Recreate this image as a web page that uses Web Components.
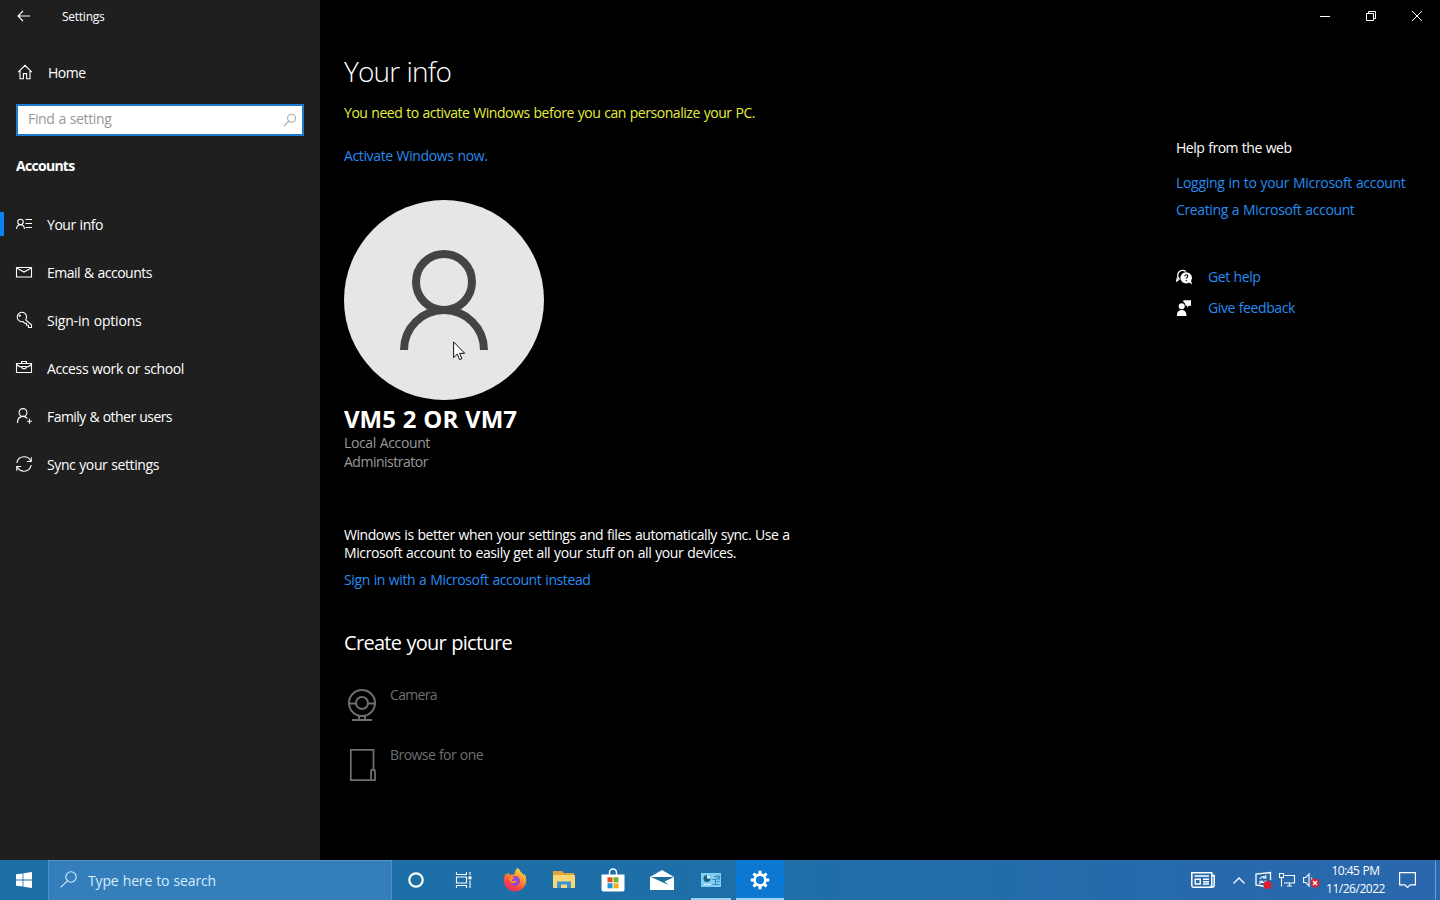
<!DOCTYPE html>
<html lang="en">
<head>
<meta charset="utf-8">
<title>Settings</title>
<style>
  html, body {
    margin: 0;
    height: 100%;
    background: #000;
    overflow: hidden;
  }
  body {
    font-family: "Open Sans", "Noto Sans", sans-serif;
    color: #fff;
  }
</style>
</head>
<body>
<settings-desktop></settings-desktop>

<script>
// Icon drawings, keyed by name: [viewBox width, viewBox height, markup].
const icons = {
  back: [14, 12, '<path d="M1 6H13M6 1L1 6l5 5"/>'],
  home: [16, 16, '<path d="M1.2 8.2L8 1.4l6.8 6.8M3 6.8v8h3.4V9.6h3.2v5.2H13v-8"/>'],
  search: [14, 14, '<circle cx="8.6" cy="5.2" r="4"/><path d="M5.8 8.2L1 13"/>'],
  find: [17, 17, '<circle cx="11" cy="6" r="5.200"/><path d="M7.400 9.800L.6 16.400"/>'],
  info: [16, 16, '<circle cx="4.500" cy="6" r="2.700"/><path d="M.6 13c0-2.600 1.600-4.300 3.900-4.300S8.400 10.400 8.400 13M9.500 3.500H16M9.500 7.500H16M9.500 11.500H16"/>'],
  mail: [16, 16, '<path d="M.5 3.500h15v9.500H.5zM.7 4L8 8l7.300-4"/>'],
  key: [16, 16, '<path d="M9.700 7.800l5.800 5v2.700h-3v-2.300h-2v-2h-2L7 9.600A4.700 4.700 0 1 1 9.700 7.800z"/><circle cx="3.700" cy="3.700" r=".6"/>'],
  work: [16, 16, '<path d="M.5 3.500h15v9H.5zM5.500 3.500v-2h5v2M.7 4.500C2.500 6.300 4.300 7 6 7.300M15.300 4.500C13.500 6.300 11.700 7 10 7.300M6 6.500h4V8c-1 .8-3 .8-4 0z"/>'],
  family: [16, 16, '<circle cx="7" cy="4.500" r="3.900"/><path d="M1.500 15c0-4 2-6.600 5.500-6.600 2 0 3.400.9 4.300 2.200M13.500 10.800v5M11 13.300h5"/>'],
  sync: [16, 16, '<path d="M.8 6.800C1.700 3 4.600.8 8 .8c3 0 5.700 1.700 6.900 4.400M15.200 1.200v4.300h-4.300M15.200 9.200C14.300 13 11.400 15.200 8 15.200c-3 0-5.700-1.700-6.900-4.400M.8 14.800v-4.300h4.300"/>'],
  minimize: [10, 10, '<path d="M0 5.500h10"/>'],
  restore: [10, 10, '<path d="M.5 2.500h7v7h-7zM2.500 2.500v-2h7v7h-2"/>'],
  close: [10, 10, '<path d="M0 0l10 10M10 0L0 10"/>'],
  help: [16, 16, '<path d="M3.500 10.300A5 5 0 1 1 9.800 2.500M3.500 10.300L.7 12l.6-3.500" stroke-width="1.300"/><path class="f" d="M10 3.200a5.600 5.600 0 1 0 3 10.300l3 1.900-.9-3.600A5.600 5.600 0 0 0 10 3.200z"/><path d="M8.800 7.200c0-2 3-1.800 3 0 0 1.200-1.500 1.100-1.500 2.600M10.300 11v1.200" stroke="#000" stroke-width="1.100"/>'],
  feedback: [16, 16, '<circle class="f" cx="5.700" cy="6.300" r="3"/><path class="f" d="M.9 16c0-3.500 1.200-6 4.800-6s4.800 2.500 4.800 6zM7.500.2H15v5.500h-2.200L11 7.800V5.700H9.500C9.500 3.800 8.600 2.600 7.200 2z"/>'],
  camera: [36, 40, '<g stroke-width="2"><circle cx="18" cy="18" r="13"/><circle cx="18" cy="18" r="6"/><path d="M5 18.500h7M24 18.500h7M15 30v4M21 30v4M8 35h20"/></g>'],
  browse: [36, 40, '<path d="M29.500 24V4.800H6.800v30.400H28M27 34V27c0-1.500.8-2.500 2-2.500s2 1 2 2.500v8.200h-4z" stroke-width="1.800"/>'],
  person: [200, 200, '<circle cx="100" cy="82" r="28"/><path d="M60 150a40 40 0 0 1 80 0"/>'],
  pointer: [13, 20, '<path d="M.6.9v15.700l3.700-3.500 2.300 5.500 2.300-1-2.300-5.300h5.100z" fill="#fff" stroke="#111"/>'],
  start: [16, 16, '<path class="f" d="M0 2.300L6.600 1.400v6.200H0zM7.400 1.300L16 0v7.600H7.400zM0 8.400h6.600v6.200L0 13.700zM7.400 8.400H16V16l-8.600-1.300z"/>'],
  cortana: [16, 16, '<circle cx="8" cy="8" r="6.700" stroke-width="2.200"/>'],
  tasks: [18, 16, '<path d="M1.500 0v2.500h10V0M1.500 5h10v6h-10zM1.500 16v-2.500h10V16M15 0v3M15 8.500V16"/><path class="f" d="M13.500 4.300h3v3h-3z"/>'],
  firefox: [24, 24, `<defs>
      <linearGradient id="fox" x1=".85" y1="0" x2=".3" y2="1"><stop offset="0" stop-color="#ffe14a"/><stop offset=".4" stop-color="#ff9a2b"/><stop offset=".75" stop-color="#fa4443"/><stop offset="1" stop-color="#e52675"/></linearGradient>
    </defs>
    <path class="n" fill="url(#fox)" d="M14.500 0c2 1 3 3 3.200 4.300 1 .2 2.400 1.400 2.700 2.800.8-.3.700-1.300.7-1.300 2 2 2.400 5.300 2 8.200C22.300 19.500 17.500 23.500 12 23.500 5.700 23.500.8 18.500.8 12.500c0-3 .8-5.500 2.600-7.700L3.800 7l1.700-2.500L6.500 7c1.500-.8 3.500-.6 5-.2C11.500 4 12.600 1.500 14.500 0z"/>
    <circle class="n" cx="12" cy="13" r="5" fill="#9147d9"/>
    <path class="n" fill="#ff8a2c" d="M6 9.500c2-1.600 4-.5 5.500.2 0 1-2.500 1.300-2.800 2.800 1.800 1.200 4 .2 5.300-.5-.5 2.500-2.700 3.500-5 3C7.500 14.600 6 12.500 6 9.500z"/>`],
  explorer: [22, 20, '<path class="n" fill="#dca63d" d="M0 1h9l2 2h10v5H0z"/><path class="n" fill="#f8d775" d="M0 5h22v13H0z"/><path class="n" fill="#3b93d3" d="M4 11.500h14V18h-4v-3.500H8V18H4z"/>'],
  store: [24, 24, '<path d="M8.500 7V4.500a3.500 3.500 0 0 1 7 0V7" stroke-width="1.400"/><path class="f" d="M.5 6.500h23v15.200a1.800 1.800 0 0 1-1.800 1.800H2.300A1.800 1.800 0 0 1 .5 21.700z"/><path class="n" fill="#e34e25" d="M6.500 9.300h5v5h-5z"/><path class="n" fill="#74af20" d="M12.500 9.300h5v5h-5z"/><path class="n" fill="#1795d4" d="M6.500 15.300h5v5h-5z"/><path class="n" fill="#f4ad14" d="M12.500 15.300h5v5h-5z"/>'],
  letter: [24, 20, '<path class="f" d="M0 7L12 0l12 7v13H0z"/><path class="n" fill="#1e6e9e" d="M1 7h23l-9.500 4.500 4 3.500z"/>'],
  panel: [20, 14, '<path class="n" fill="#82cdf3" d="M0 0h20v14H0z"/><circle class="n" cx="6" cy="5.500" r="3.500" fill="#185d83"/><path class="n" fill="#d8f1ff" d="M6 5.500V2a3.500 3.500 0 0 1 3.500 3.500zM3 11h7v1H3z"/><path d="M11.500 6.500h3v5h-3M16 3h2.500v3H16zM13 3.500h2M15.500 8.500h3M15.500 11.500h3" stroke="#2d86b5"/>'],
  gear: [20, 20, '<circle cx="10" cy="10" r="5.400" stroke-width="2.600"/><path d="M10 4.500V.8M10 15.500v3.700M4.500 10H.8M15.500 10h3.700M6.100 6.100L3.500 3.500M13.900 13.900l2.600 2.600M6.100 13.900l-2.600 2.600M13.900 6.100l2.600-2.600" stroke-width="3"/>'],
  news: [24, 16, '<path d="M.8.8h20v14.400H2.500A1.700 1.700 0 0 1 .8 13.500zM20.800 3.500h2.400v10a1.700 1.700 0 0 1-3.400 0" stroke-width="1.500"/><path d="M3.500 4H18M12 7.300h6M12 9.700h6M12 12h6M4.200 7.300h5V12h-5z" stroke-width="1.400"/>'],
  chevron: [12, 7, '<path d="M.5 6.500L6 1l5.500 5.500" stroke-width="1.300"/>'],
  update: [18, 18, '<path d="M15.500 9V1.500L1 3v11l9 1.500" stroke-width="1.300"/><path d="M5 8c.6-2 3-3 5-1.800M10.800 4v3H8M11 9.300c-.6 2-3 2.700-5 1.600M5 13.300v-3h3" stroke-width="1.100"/><circle class="n" cx="12.500" cy="14" r="4" fill="#dc1c2f"/>'],
  network: [16, 14, '<path d="M5.500 2.500h10v7.500H5M8 13h5M10.500 10v3M.5.500h4v4h-4zM2.500 4.500v9" stroke-width="1.100"/>'],
  volume: [18, 14, '<path d="M.6 4.500h2.200L6 1v12L2.800 9.500H.6z" stroke-width="1.100"/><path d="M8 4.300c.8.800 1 1.700 1 2.700" stroke-width="1"/><circle class="n" cx="12" cy="10" r="4.500" fill="#d8232f"/><path d="M10 8l4 4M14 8l-4 4" stroke-width="1.300"/>'],
  action: [17, 16, '<path d="M.6.600h15.800v12.300h-5.200L8.500 15.500l-2.700-2.600H.6z" stroke-width="1.200"/>']
}

/**
 * Draws one of the icons above.
 */
customElements.define('ui-icon',
  class extends HTMLElement {
    constructor () {
      super()
      this.attachShadow({ mode: 'open' })
    }

    connectedCallback () {
      const [w, h, markup] = icons[this.getAttribute('name')]
      this.shadowRoot.innerHTML = `
        <style>
          :host { display: block; flex: none; width: ${w}px; height: ${h}px; }
          svg { display: block; overflow: visible; fill: none; stroke: currentColor; stroke-width: var(--stroke, 1.1); }
          .f { fill: currentColor; stroke: none; }
          .n { stroke: none; }
        </style>
        <svg width="${w}" height="${h}" viewBox="0 0 ${w} ${h}" aria-hidden="true">${markup}</svg>`
    }
  }
)

/**
 * A single line of text. The letters are tracked so that the line takes
 * the width given in the "span" attribute.
 */
customElements.define('ui-text',
  class extends HTMLElement {
    #line

    constructor () {
      super()
      this.attachShadow({ mode: 'open' }).innerHTML = `
        <style>
          :host { display: block; white-space: nowrap; font-size: 14px; line-height: 20px; word-spacing: .6px; }
          :host([kind="link"]) { color: #268cf2; }
          :host([kind="dim"]) { color: #999; }
          :host([kind="off"]) { color: #6e6e6e; }
          :host([kind="warn"]) { color: #e4ee3c; }
          :host([kind="title"]) { font-size: 28px; line-height: 36px; font-weight: 350; }
          :host([kind="name"]) { font-size: 24px; line-height: 30px; font-weight: 700; }
          :host([kind="heading"]) { font-size: 20px; line-height: 28px; }
          :host([kind="strong"]) { font-weight: 700; }
          :host([kind="small"]) { font-size: 12px; line-height: 18px; }
          span { display: inline-block; }
        </style>
        <span><slot></slot></span>`
      this.#line = this.shadowRoot.querySelector('span')
    }

    connectedCallback () {
      const span = Number(this.getAttribute('span'))
      if (!span) return
      const count = this.textContent.length
      const natural = this.#line.getBoundingClientRect().width
      this.#line.style.letterSpacing = `${(span - natural) / count}px`
    }
  }
)

/**
 * An entry of the sidebar navigation.
 */
customElements.define('nav-item',
  class extends HTMLElement {
    constructor () {
      super()
      this.attachShadow({ mode: 'open' }).innerHTML = `
        <style>
          :host { display: flex; align-items: center; height: 48px; }
          .bar { width: 4px; height: 24px; margin-right: 12px; margin-bottom: 2px; }
          :host([selected]) .bar { background: #0a84f5; }
          ui-icon { margin: 0 15px 2px 0; }
        </style>
        <div class="bar"></div>
        <ui-icon name="${this.getAttribute('icon')}"></ui-icon>
        <slot></slot>`
    }
  }
)

/**
 * The left pane: title, home, search field and navigation.
 */
customElements.define('settings-sidebar',
  class extends HTMLElement {
    constructor () {
      super()
      this.attachShadow({ mode: 'open' }).innerHTML = `
        <style>
          :host { display: flex; flex-direction: column; width: 320px; background: #1f1f1f; }
          header { display: flex; align-items: center; height: 32px; padding-left: 17px; gap: 31px; }
          header ui-text { margin-top: 2px; }
          .home { display: flex; height: 20px; margin-top: 31px; padding-left: 17px; gap: 15px; }
          .home ui-icon { margin-top: 1px; }
          .search {
            display: flex; align-items: center; justify-content: space-between;
            box-sizing: border-box; height: 32px; margin: 21px 16px 0; padding: 0 5px 2px 10px;
            border: 2px solid #1c7cd0; background: #fff; color: #989898;
          }
          .search ui-icon { margin-top: 2px; color: #a8a8a8; }
          .group { margin: 20px 0 25px 16px; }
        </style>
        <header><ui-icon name="back"></ui-icon><ui-text kind="small" span="42.5">Settings</ui-text></header>
        <div class="home"><ui-icon name="home"></ui-icon><ui-text span="37.5">Home</ui-text></div>
        <div class="search"><ui-text span="83.5">Find a setting</ui-text><ui-icon name="search"></ui-icon></div>
        <ui-text class="group" kind="strong" span="58.5">Accounts</ui-text>
        <nav>
          <nav-item icon="info" selected><ui-text span="56">Your info</ui-text></nav-item>
          <nav-item icon="mail"><ui-text span="105">Email &amp; accounts</ui-text></nav-item>
          <nav-item icon="key"><ui-text span="94.5">Sign-in options</ui-text></nav-item>
          <nav-item icon="work"><ui-text span="137">Access work or school</ui-text></nav-item>
          <nav-item icon="family"><ui-text span="125">Family &amp; other users</ui-text></nav-item>
          <nav-item icon="sync"><ui-text span="112">Sync your settings</ui-text></nav-item>
        </nav>`
    }
  }
)

/**
 * The account picture, with the mouse pointer over it.
 */
customElements.define('account-picture',
  class extends HTMLElement {
    constructor () {
      super()
      this.attachShadow({ mode: 'open' }).innerHTML = `
        <style>
          :host { display: block; position: relative; width: 200px; height: 200px; border-radius: 50%; background: #e6e6e6; color: #444; --stroke: 8; }
          .pointer { position: absolute; left: 109px; top: 141px; --stroke: 1; }
        </style>
        <ui-icon name="person"></ui-icon>
        <ui-icon class="pointer" name="pointer"></ui-icon>`
    }
  }
)

/**
 * The "Your info" page.
 */
customElements.define('info-page',
  class extends HTMLElement {
    constructor () {
      super()
      this.attachShadow({ mode: 'open' }).innerHTML = `
        <style>
          :host { display: block; box-sizing: border-box; flex: none; width: 856px; padding: 21px 0 0 24px; }
          .warn { margin-top: 14px; }
          .activate { margin: 23px 0 34px; }
          .name { margin: 4px 0 -1px; }
          .role { line-height: 19px; }
          .sync { margin-top: 55px; }
          .sync ui-text { line-height: 18px; }
          .signin { margin-top: 8px; }
          .create { margin: 39px 0 28px; }
          .source { display: flex; height: 60px; gap: 10px; color: #6e6e6e; }
        </style>
        <ui-text kind="title" span="107">Your info</ui-text>
        <ui-text class="warn" kind="warn" span="411">You need to activate Windows before you can personalize your PC.</ui-text>
        <ui-text class="activate" kind="link" span="143.5">Activate Windows now.</ui-text>
        <account-picture></account-picture>
        <ui-text class="name" kind="name" span="173">VM5 2 OR VM7</ui-text>
        <ui-text class="role" kind="dim" span="86">Local Account</ui-text>
        <ui-text class="role" kind="dim" span="84">Administrator</ui-text>
        <div class="sync">
          <ui-text span="445.5">Windows is better when your settings and files automatically sync. Use a</ui-text>
          <ui-text span="392">Microsoft account to easily get all your stuff on all your devices.</ui-text>
        </div>
        <ui-text class="signin" kind="link" span="246.5">Sign in with a Microsoft account instead</ui-text>
        <ui-text class="create" kind="heading" span="168">Create your picture</ui-text>
        <div class="source"><ui-icon name="camera"></ui-icon><ui-text kind="off" span="47">Camera</ui-text></div>
        <div class="source"><ui-icon name="browse"></ui-icon><ui-text kind="off" span="93">Browse for one</ui-text></div>`
    }
  }
)

/**
 * The help links on the right.
 */
customElements.define('help-links',
  class extends HTMLElement {
    constructor () {
      super()
      this.attachShadow({ mode: 'open' }).innerHTML = `
        <style>
          :host { display: block; padding-top: 106px; }
          .first { margin: 15px 0 7px; }
          .row { display: flex; align-items: center; gap: 16px; }
          .get { margin: 47px 0 11px; }
        </style>
        <ui-text span="115.5">Help from the web</ui-text>
        <ui-text class="first" kind="link" span="229.5">Logging in to your Microsoft account</ui-text>
        <ui-text kind="link" span="178.5">Creating a Microsoft account</ui-text>
        <div class="row get"><ui-icon name="help"></ui-icon><ui-text kind="link" span="52.5">Get help</ui-text></div>
        <div class="row"><ui-icon name="feedback"></ui-icon><ui-text kind="link" span="87">Give feedback</ui-text></div>`
    }
  }
)

/**
 * A button of the taskbar.
 */
customElements.define('task-button',
  class extends HTMLElement {
    constructor () {
      super()
      this.attachShadow({ mode: 'open' }).innerHTML = `
        <style>
          :host { display: flex; align-items: center; justify-content: center; box-sizing: border-box; width: 49px; height: 40px; }
          :host([open]) { width: 40px; margin: 0 5px; border-bottom: 2px solid #9bd3fb; padding-top: 2px; }
          :host([active]) { width: 48px; background: #0e79d3; border-bottom: 2px solid #9bd3fb; padding-top: 2px; }
        </style>
        <ui-icon name="${this.getAttribute('icon')}"></ui-icon>`
    }
  }
)

/**
 * The taskbar.
 */
customElements.define('task-bar',
  class extends HTMLElement {
    constructor () {
      super()
      this.attachShadow({ mode: 'open' }).innerHTML = `
        <style>
          :host { display: flex; height: 40px; background: linear-gradient(90deg, #1c6ea5, #1e6fa8 50%, #2a67ad); }
          .start { width: 48px; }
          .search {
            display: flex; align-items: center; box-sizing: border-box; width: 344px; padding: 0 0 0 11px; gap: 11px;
            border: 1px solid #4b93cc; border-bottom: 0; background: #347fbb; color: #d6ecfb;
          }
          .search ui-text { margin-top: 1px; }
          .search ui-icon { margin-bottom: 2px; }
          .cortana { width: 48px; }
          .tasks { width: 48px; margin-right: 2px; }
          .tray { display: flex; align-items: center; margin-left: auto; }
          .chevron { margin: 0 10px 0 18px; }
          .update { margin-right: 6px; }
          .network { margin-right: 8px; }
          .clock { display: flex; flex-direction: column; align-items: center; margin: 0 14px 0 5px; }
          .peek { width: 4px; height: 40px; margin-left: 19px; border-left: 1px solid #6d9dcb; }
        </style>
        <task-button class="start" icon="start"></task-button>
        <div class="search"><ui-icon name="find"></ui-icon><ui-text span="128">Type here to search</ui-text></div>
        <task-button class="cortana" icon="cortana"></task-button>
        <task-button class="tasks" icon="tasks"></task-button>
        <task-button icon="firefox"></task-button>
        <task-button icon="explorer"></task-button>
        <task-button icon="store"></task-button>
        <task-button icon="letter"></task-button>
        <task-button icon="panel" open></task-button>
        <task-button icon="gear" active></task-button>
        <div class="tray">
          <ui-icon name="news"></ui-icon>
          <ui-icon class="chevron" name="chevron"></ui-icon>
          <ui-icon class="update" name="update"></ui-icon>
          <ui-icon class="network" name="network"></ui-icon>
          <ui-icon name="volume"></ui-icon>
          <div class="clock">
            <ui-text kind="small" span="48">10:45 PM</ui-text>
            <ui-text kind="small" span="59">11/26/2022</ui-text>
          </div>
          <ui-icon name="action"></ui-icon>
          <div class="peek"></div>
        </div>`
    }
  }
)

/**
 * The whole screen: the settings window above the taskbar.
 */
customElements.define('settings-desktop',
  class extends HTMLElement {
    constructor () {
      super()
      this.attachShadow({ mode: 'open' }).innerHTML = `
        <style>
          :host { display: flex; flex-direction: column; width: 1440px; height: 900px; }
          .window { display: flex; flex: 1; }
          main { flex: 1; }
          .controls { display: flex; justify-content: flex-end; align-items: center; height: 32px; padding-right: 18px; gap: 36px; --stroke: 1; }
          .content { display: flex; }
        </style>
        <div class="window">
          <settings-sidebar></settings-sidebar>
          <main>
            <div class="controls">
              <ui-icon name="minimize"></ui-icon>
              <ui-icon name="restore"></ui-icon>
              <ui-icon name="close"></ui-icon>
            </div>
            <div class="content">
              <info-page></info-page>
              <help-links></help-links>
            </div>
          </main>
        </div>
        <task-bar></task-bar>`
    }
  }
)
</script>
</body>
</html>
